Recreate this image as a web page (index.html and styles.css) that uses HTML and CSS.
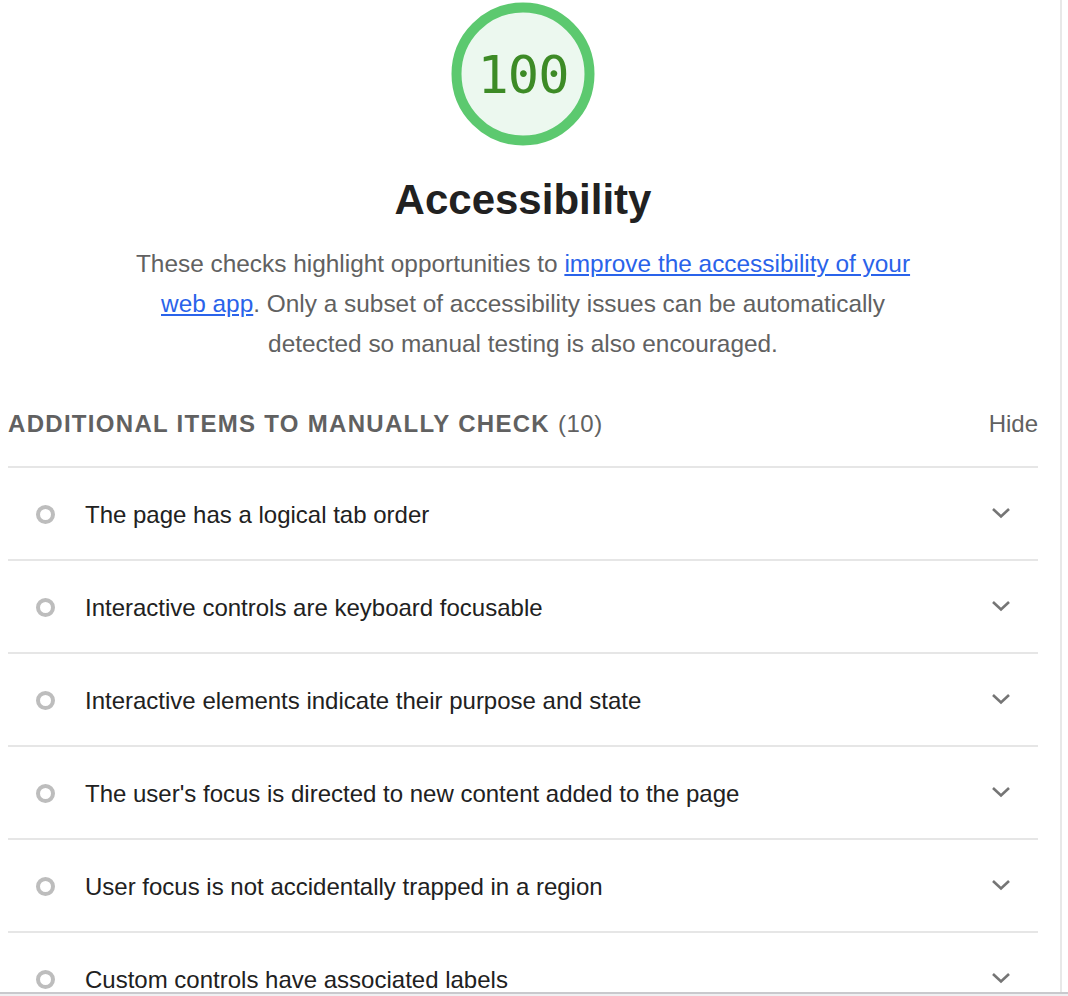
FILE: index.html
```html
<!DOCTYPE html>
<html lang="en">
<head>
<meta charset="utf-8">
<title>Accessibility</title>
<link rel="stylesheet" href="styles.css">
</head>
<body>
<div class="frame">
  <div class="viewport">
    <div class="main">
      <div class="content">
        <div class="gauge">
          <svg class="gauge-svg" width="144" height="144" viewBox="0 0 144 144">
            <circle cx="72" cy="72" r="66.5" fill="#ecf8ef" stroke="#5cc96f" stroke-width="10"/>
          </svg>
          <span class="gauge-value">100</span>
        </div>
        <h1 class="title">Accessibility</h1>
        <p class="desc">These checks highlight opportunities to <a href="#">improve the accessibility of your web app</a>. Only a subset of accessibility issues can be automatically detected so manual testing is also encouraged.</p>
        <div class="group-header">
          <div class="group-title">ADDITIONAL ITEMS TO MANUALLY CHECK <span class="count">(10)</span></div>
          <div class="hide">Hide</div>
        </div>
        <ul class="audits">
          <li class="audit"><span class="ring"></span><span class="audit-text">The page has a logical tab order</span><svg class="chev" width="20" height="12" viewBox="0 0 20 12"><path d="M2 2 L10 9.5 L18 2" fill="none" stroke="#757575" stroke-width="2.6"/></svg></li>
          <li class="audit"><span class="ring"></span><span class="audit-text">Interactive controls are keyboard focusable</span><svg class="chev" width="20" height="12" viewBox="0 0 20 12"><path d="M2 2 L10 9.5 L18 2" fill="none" stroke="#757575" stroke-width="2.6"/></svg></li>
          <li class="audit"><span class="ring"></span><span class="audit-text">Interactive elements indicate their purpose and state</span><svg class="chev" width="20" height="12" viewBox="0 0 20 12"><path d="M2 2 L10 9.5 L18 2" fill="none" stroke="#757575" stroke-width="2.6"/></svg></li>
          <li class="audit"><span class="ring"></span><span class="audit-text">The user's focus is directed to new content added to the page</span><svg class="chev" width="20" height="12" viewBox="0 0 20 12"><path d="M2 2 L10 9.5 L18 2" fill="none" stroke="#757575" stroke-width="2.6"/></svg></li>
          <li class="audit"><span class="ring"></span><span class="audit-text">User focus is not accidentally trapped in a region</span><svg class="chev" width="20" height="12" viewBox="0 0 20 12"><path d="M2 2 L10 9.5 L18 2" fill="none" stroke="#757575" stroke-width="2.6"/></svg></li>
          <li class="audit"><span class="ring"></span><span class="audit-text">Custom controls have associated labels</span><svg class="chev" width="20" height="12" viewBox="0 0 20 12"><path d="M2 2 L10 9.5 L18 2" fill="none" stroke="#757575" stroke-width="2.6"/></svg></li>
        </ul>
      </div>
    </div>
    <div class="side"></div>
  </div>
  <div class="bottombar"></div>
</div>
</body>
</html>
```

FILE: styles.css
```css
html, body {
  margin: 0;
  padding: 0;
  background: #ffffff;
}
body {
  font-family: "Liberation Sans", Arial, sans-serif;
  color: #212121;
}
.frame {
  width: 1068px;
  height: 996px;
  display: flex;
  flex-direction: column;
  overflow: hidden;
}
.viewport {
  height: 992px;
  display: flex;
  overflow: hidden;
}
.main {
  width: 1062px;
  border-right: 2px solid #e8e8e8;
  box-sizing: border-box;
  padding-left: 8px;
}
.side {
  flex: 1;
  background: #ffffff;
}
.content {
  width: 1030px;
}
.bottombar {
  height: 4px;
  border-top: 2px solid #c9c9cd;
  background: #f0f0f2;
  box-sizing: border-box;
}
.gauge {
  position: relative;
  width: 144px;
  height: 144px;
  margin: 2px auto 0;
  display: flex;
  align-items: center;
  justify-content: center;
}
.gauge-svg {
  position: absolute;
  left: 0;
  top: 0;
}
.gauge-value {
  position: relative;
  top: 1px;
  font-family: "DejaVu Sans Mono", "Liberation Mono", monospace;
  font-size: 52px;
  color: #3d8b26;
  letter-spacing: -1px;
}
.title {
  margin: 28px 0 0;
  text-align: center;
  font-size: 42px;
  line-height: 52px;
  font-weight: bold;
  color: #212121;
}
.desc {
  margin: 18px auto 0;
  max-width: 800px;
  text-align: center;
  font-size: 24.4px;
  line-height: 40px;
  color: #616161;
}
.desc a {
  color: #2a63ea;
  text-decoration: underline;
}
.group-header {
  margin-top: 40px;
  display: flex;
  justify-content: space-between;
  align-items: center;
  height: 40px;
  padding-bottom: 22px;
  border-bottom: 2px solid #e6e6e6;
}
.group-title {
  font-size: 24px;
  font-weight: bold;
  letter-spacing: 1.3px;
  color: #616161;
}
.count {
  font-weight: normal;
  letter-spacing: 0.5px;
}
.hide {
  font-size: 24px;
  color: #616161;
}
.audits {
  list-style: none;
  margin: 0;
  padding: 0;
}
.audit {
  height: 93px;
  box-sizing: border-box;
  border-bottom: 2px solid #e6e6e6;
  display: flex;
  align-items: center;
  padding-left: 28px;
  padding-top: 3px;
}
.ring {
  width: 19px;
  height: 19px;
  box-sizing: border-box;
  border: 4px solid #bdbdbd;
  border-radius: 50%;
  flex: none;
  position: relative;
  top: -1px;
}
.audit-text {
  margin-left: 30px;
  font-size: 24px;
  color: #212121;
  flex: 1;
}
.chev {
  margin-right: 27px;
  flex: none;
  position: relative;
  top: -2px;
}
```
